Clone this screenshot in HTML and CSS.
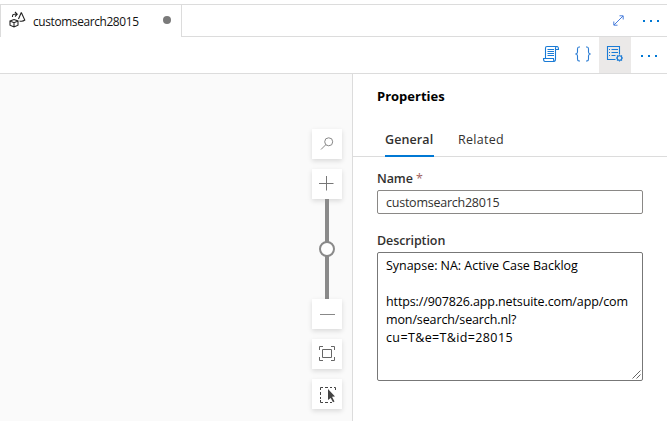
FILE: index.html
```html
<!DOCTYPE html>
<html lang="en">
<head>
<meta charset="utf-8">
<title>customsearch28015</title>
<link rel="stylesheet" href="styles.css">
</head>
<body>
<header class="tabs">
  <div class="tab">
    <svg class="tab-icon" width="18" height="18" viewBox="0 0 18 18" fill="none" stroke="#222" stroke-width="1.1"><path d="M2 10 6 8.500 10 10v4.200L6 16 2 14.200ZM2 10 6 11.700 10 10M6 11.700V16M4.500 6V5Q4.500 3.300 6.500 3.300H9M7 1 9.200 3.300 7 5.500M13.300 1.500 10.500 8M13.300 1.500 16.800 9Q15 10.700 11.500 10"/></svg>
    <span class="tab-name">customsearch28015</span>
    <span class="dirty"></span>
  </div>
  <div class="tab-rest">
    <svg class="expand" width="11" height="11" viewBox="0 0 11 11" fill="none" stroke="#4b7fdc"><path d="M1 10 10 1M6.500 .8h3.700V4.500M.8 6.500v3.700H4.500"/></svg>
    <span class="dots"><i></i><i></i><i></i></span>
  </div>
</header>
<div class="toolbar">
  <svg class="script" width="18" height="18" viewBox="0 0 18 18" fill="none" stroke="#1a7bd6" stroke-width="1.1"><path d="M3.500 13V3Q3.500 1.500 5 1.500H15Q16.500 1.500 16.500 4.500H13.500V14Q13.500 16.500 12 16.500H3Q1.500 16.500 1.500 13.500H11.500Q11.500 16.500 12.500 16.500M13.500 4.500V3Q13.500 1.500 15 1.500M5.500 4.500H12M5.500 6.500H12M5.500 8.500H12M5.500 10.500H12"/></svg>
  <svg class="braces" width="16" height="16" viewBox="0 0 16 16" fill="none" stroke="#2b7cd3" stroke-width="1.1"><path d="M5 1H4Q2.500 1 2.500 3V6Q2.500 7.500 1 8 2.500 8.500 2.500 10v3Q2.500 15 4 15H5M11 1h1Q13.500 1 13.500 3V6Q13.500 7.500 15 8 13.500 8.500 13.500 10v3Q13.500 15 12 15H11"/></svg>
  <span class="active"><svg width="18" height="18" viewBox="0 0 18 18" fill="none" stroke="#1a7bd6" stroke-width="1.100"><path d="M9.500 14.500H1.500V1.500H13.500V9M3 4.500H4M5.500 4.500H12M3 7.500H4M5.500 7.500H12M3 10.500H4M5.500 10.500H9.500"/><circle cx="13.500" cy="13" r="2.300"/><path d="M13.500 9.500v1.200M13.500 15.300v1.200M10 13h1.200M15.800 13H17M11 10.500l.9.900M15.100 14.600l.9.900M16 10.500l-.9.900M11.900 14.600l-.9.900"/></svg></span>
  <span class="dots"><i></i><i></i><i></i></span>
</div>
<main class="work">
  <section class="canvas">
    <div class="controls">
      <div class="btn"><svg width="16" height="16" viewBox="0 0 16 16" fill="none" stroke="#888"><circle cx="9.700" cy="5.800" r="4"/><path d="M6.800 8.700 2 13.500"/></svg></div>
      <div class="btn"><svg width="16" height="16" viewBox="0 0 16 16" stroke="#777"><path d="M0 7.500H14.500M7.500 0V14.500"/></svg></div>
      <div class="track"><div class="knob"></div></div>
      <div class="btn"><svg width="16" height="16" viewBox="0 0 16 16" stroke="#888"><path d="M1 8.500H16"/></svg></div>
      <div class="btn"><svg width="16" height="16" viewBox="0 0 16 16" fill="none" stroke="#666"><path d="M.5 4V.5H4M12 .5h3.500V4M15.500 11v3.500H12M4 14.500H.5V11"/><path d="M3.500 3.500h9v8h-9z"/></svg></div>
      <div class="btn"><svg width="17" height="17" viewBox="0 0 17 17" fill="none" stroke="#444"><path d="M1.500 4V1.500H4M6 1.500H9M11 1.500H13M15 1.500h1.500V4M1.500 6V9M1.500 11V13M1.500 14v2.500H4M6 16.500H9M11 16.500H13"/><path d="m9 3 7 7.500-3 .2L15.500 15.500l-1.500.8L11.700 12 9 14Z" fill="#444" stroke="none"/></svg></div>
    </div>
  </section>
  <aside class="panel">
    <h2>Properties</h2>
    <nav><span class="nav-item selected">General</span><span class="nav-item related">Related</span></nav>
    <form>
      <label>Name <b>*</b></label>
      <div class="field">customsearch28015</div>
      <label class="desc-label">Description</label>
      <div class="area"><span class="summary">Synapse: NA: Active Case Backlog</span><br><br><span class="link">https://907826.app.netsuite.com/app/com</span><br><span class="link">mon/search/search.nl?</span><br><span class="query">cu=T&amp;e=T&amp;id=28015</span>
        <svg class="grip" width="9" height="9" viewBox="0 0 9 9" stroke="#666"><path d="M.5 8.500 8.500.5M4.500 8.500l4-4"/></svg>
      </div>
    </form>
  </aside>
</main>
</body>
</html>
```
FILE: styles.css
```css
* { box-sizing: border-box; }
body { margin: 0; padding-top: 4px; width: 667px; height: 421px; overflow: hidden; background: #fff; color: #323130; font: 12.5px/18px "Open Sans", "Noto Sans", sans-serif; white-space: nowrap; }
svg { display: block; flex: none; }
.tabs { display: flex; height: 33px; border-top: 1px solid #dcdcdc; }
.tab { display: flex; align-items: center; width: 182px; padding-left: 7px; border: solid #dcdcdc; border-width: 0 1px; color: #111; }
.tab-icon { margin-top: -3px; }
.tab-name { margin-left: 7px; width: 105px; font-size: 11.9px; letter-spacing: -.37px; }
.dirty { width: 8px; height: 8px; margin: -2px 0 0 25px; border-radius: 50%; background: #7a7a7a; }
.tab-rest { flex: 1; display: flex; align-items: center; justify-content: flex-end; border-bottom: 1px solid #dcdcdc; }
.expand { margin: -1px 19px 0 0; }
.dots { display: flex; gap: 5px; }
.dots i { width: 2px; height: 2px; background: #0078d4; }
.tab-rest .dots { margin: 1px 8px 0 0; }
.toolbar { height: 37px; display: flex; align-items: center; justify-content: flex-end; border-bottom: 1px solid #dcdcdc; }
.script { margin: -2px 15px 0 0; }
.braces { margin: -3px 8px 0 0; }
.active { display: flex; align-items: center; justify-content: center; width: 32px; height: 36px; padding-bottom: 2px; background: #ebe9e8; }
.toolbar .dots { margin: 1px 10px 0; }
.work { display: flex; height: 347px; }
.canvas { width: 353px; border-right: 1px solid #dcdcdc; background: #fafafa; padding: 55px 0 0 312px; }
.controls { width: 30px; display: flex; flex-direction: column; align-items: center; gap: 10px; }
.btn { display: flex; align-items: center; justify-content: center; width: 30px; height: 30px; background: #fff; box-shadow: 0 2px 5px #0002; flex: none; }
.track { width: 4px; height: 100px; margin: -10px 0; background: #8a8a8a; display: flex; align-items: center; justify-content: center; flex: none; }
.knob { width: 16px; height: 16px; flex: none; border: 2px solid #8a8a8a; border-radius: 50%; background: #fff; }
.panel { flex: 1; }
h2 { margin: 0; padding: 12px 0 0 24px; height: 42px; font-size: 13px; line-height: 20px; color: #000; font-weight: 700; }
nav { display: flex; height: 41px; padding-left: 32px; border-bottom: 1px solid #dcdcdc; }
.nav-item { height: 41px; padding-top: 15px; }
.selected { width: 49px; border-bottom: 2px solid #0078d4; font-weight: 600; letter-spacing: .1px; }
.related { margin-left: 24px; letter-spacing: .3px; }
form { padding: 13px 0 0 24px; }
label { display: block; height: 20px; font-weight: 600; letter-spacing: -.1px; }
b { color: #a4645f; font-weight: 400; }
.field { width: 266px; height: 24px; border: 1px solid #8a8886; border-radius: 2px; padding: 3px 8px; letter-spacing: -.24px; }
.desc-label { margin-top: 18px; }
.area { position: relative; width: 266px; height: 129px; border: 1px solid #777; border-radius: 2px; padding: 4px 8px; color: #000; }
.summary { letter-spacing: -.03px; }
.link { letter-spacing: -.12px; }
.query { letter-spacing: .37px; }
.grip { position: absolute; right: 1px; bottom: 1px; }
```
